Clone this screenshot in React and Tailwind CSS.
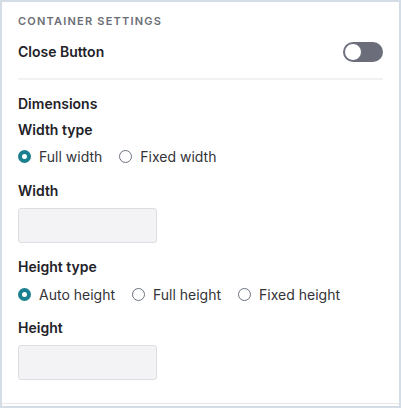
export default function App() {
  const Radio = ({ checked, label }) => (
    <label className="flex items-center gap-[8px]">
      {checked ? (
        <span className="box-border h-[13px] w-[13px] rounded-full border-[4px] border-[#1a7f8e] bg-white" />
      ) : (
        <span className="box-border h-[13px] w-[13px] rounded-full border border-[#6b7280] bg-white" />
      )}
      <span className="text-[14px] text-[#333338]">{label}</span>
    </label>
  );
  return (
    <div
      className="h-[408px] w-[401px] overflow-hidden border-2 border-[#d4dce5] bg-white"
      style={{ fontFamily: "Inter, 'Noto Sans', sans-serif" }}
    >
      <div className="flex h-[402px] flex-col border-b border-[#e5e7eb] px-[16px] pr-[16px]">
        <div className="mt-[12px] text-[11px] font-semibold leading-[14px] tracking-[0.11em] text-[#6b6e76]">
          CONTAINER SETTINGS
        </div>
        <div className="mt-[14px] flex items-center justify-between">
          <span className="text-[14px] font-semibold leading-[18px] text-[#222228]">Close Button</span>
          <span className="relative mr-[0px] flex h-[20px] w-[40px] items-center rounded-full bg-[#6b6e7a]">
            <span className="absolute left-[1px] h-[18px] w-[18px] rounded-full border-[1.5px] border-[#6b6e7a] bg-white" />
          </span>
        </div>
        <div className="mt-[16px] h-[2px] bg-[#f2f2f4]" />
        <div className="mt-[15px] text-[14px] font-semibold leading-[18px] text-[#222228]">Dimensions</div>
        <div className="mt-[8px] text-[14px] font-semibold leading-[18px] text-[#222228]">Width type</div>
        <div className="mt-[7px] flex items-center gap-[17px]">
          <Radio checked label="Full width" />
          <Radio label="Fixed width" />
        </div>
        <div className="mt-[15px] text-[14px] font-semibold leading-[18px] text-[#222228]">Width</div>
        <div className="mt-[8px] h-[35px] w-[139px] rounded-[3px] border border-[#dedde3] bg-[#f3f3f6]" />
        <div className="mt-[15px] text-[14px] font-semibold leading-[18px] text-[#222228]">Height type</div>
        <div className="mt-[8px] flex items-center gap-[17px]">
          <Radio checked label="Auto height" />
          <Radio label="Full height" />
          <Radio label="Fixed height" />
        </div>
        <div className="mt-[14px] text-[14px] font-semibold leading-[18px] text-[#222228]">Height</div>
        <div className="mt-[8px] h-[35px] w-[139px] rounded-[3px] border border-[#dedde3] bg-[#f3f3f6]" />
      </div>
    </div>
  );
}
